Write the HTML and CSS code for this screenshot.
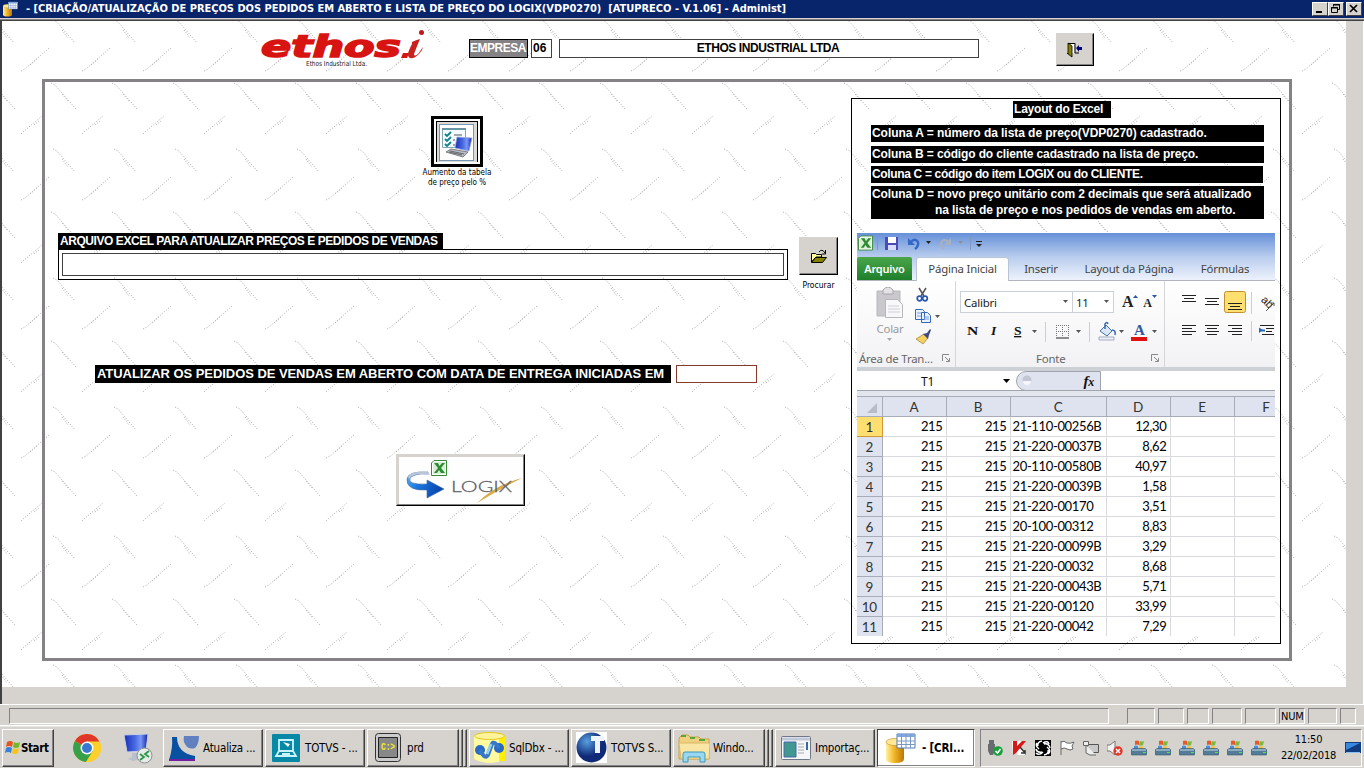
FILE: index.html
```html
<!DOCTYPE html>
<html lang="pt-BR">
<head>
<meta charset="utf-8">
<title>ATUPRECO</title>
<link rel="stylesheet" href="styles.css">
</head>
<body>
<svg class="defs" width="0" height="0">
  <defs>
    <pattern id="weave" width="61" height="129" patternUnits="userSpaceOnUse" x="-2" y="-21">
      <g fill="none" stroke="#b5b5b5" stroke-width="1" stroke-dasharray="1.200 1.500">
        <path d="M53 20l4 2 18 21M62 30l6 8M-8 20l4 2 18 21M1 30l6 8"/>
        <path d="M21 71l4-2 24-21M30 65l7-6"/>
        <path d="M51 83l4 2 21 24M62 94l7 8M-10 83l4 2 21 24M1 94l7 8"/>
        <path d="M21 134l2-2 19-16M34 125l5-4M21 5l2-2 19-16"/>
      </g>
    </pattern>
    <linearGradient id="gold" x1="0" x2="1"><stop offset="0" stop-color="#fff0a0"/><stop offset=".5" stop-color="#f0b020"/><stop offset="1" stop-color="#b87808"/></linearGradient>
    <linearGradient id="blue" x1="0" y1="0" x2="1" y2=".3"><stop offset="0" stop-color="#58b0f0"/><stop offset=".4" stop-color="#1878e0"/><stop offset="1" stop-color="#0848b0"/></linearGradient>
    <linearGradient id="screen" x1="0" x2="1"><stop offset="0" stop-color="#1830b8"/><stop offset=".45" stop-color="#4868e0"/><stop offset=".7" stop-color="#7898f8"/><stop offset="1" stop-color="#1020a0"/></linearGradient>
    <radialGradient id="globe" cx=".35" cy=".3"><stop offset="0" stop-color="#58a0e0"/><stop offset="1" stop-color="#102a78"/></radialGradient>
    <symbol id="xl" viewBox="0 0 16 16"><path d="M3 .5h12.500v15H.5V3z" fill="#fff" stroke="#3a8a3c"/><path d="M2 4l2-2h10v12H2z" fill="#d8efd2"/><path d="M3 3h4l1.500 3L11 3h3l-4 5 4 5h-4l-2-3-2 3H3l4-5z" fill="#2e8b35"/></symbol>
    <symbol id="db" viewBox="0 0 32 32"><path d="M2 10v17q0 4 9 4t9-4V10z" fill="url(#gold)"/><ellipse cx="11" cy="10" rx="9" ry="3.500" fill="#ffe998" stroke="#c58c18" stroke-width=".6"/><path d="M13 2h18v14H13z" fill="#fff" stroke="#5078b8"/><path d="M13 2h18v3H13z" fill="#7fa8e0"/><path d="M13 9h18M13 12.500h18M17.500 2v14M22 2v14M26.500 2v14" stroke="#7898c8"/></symbol>
    <symbol id="drive" viewBox="0 0 16 16"><path d="M4 1q2-1 4 0v4q-2-1-4 0z" fill="#e8582a"/><path d="M9 1q2 1 4 0l-1 4q-2 1-4 0z" fill="#7ab83a"/><path d="M3 6q2-1 4 0v3H3z" fill="#4a90d8"/><path d="M8 6q2 1 4 0l-1 4H8z" fill="#f4c020"/><path d="M0 10l2-1.500h12l2 1.500v4q0 1-1 1H1q-1 0-1-1z" fill="#527c98" stroke="#3c5868" stroke-width=".6"/><path d="M1 10h14" stroke="#c4dce8"/><path d="M12 12.500h3" stroke="#50e848"/></symbol>
  </defs>
</svg>

<header class="titlebar">
  <svg class="title-icon" viewBox="0 0 32 32"><use href="#db"/></svg>
  <h1 class="title-text">- [CRIAÇÃO/ATUALIZAÇÃO DE PREÇOS DOS PEDIDOS EM ABERTO E LISTA DE PREÇO DO LOGIX(VDP0270)&nbsp; [ATUPRECO - V.1.06] - Administ]</h1>
  <div class="win-buttons">
    <span class="win-btn"><svg width="12" height="10"><path d="M2 7h6v2H2z"/></svg></span>
    <span class="win-btn"><svg width="12" height="10"><path d="M3.500 2.500V.5h6v5h-2M3 1h7M1.500 3.500h6v5h-6zM1 4h7" fill="none" stroke="#000"/></svg></span>
    <span class="win-btn gap"><svg width="12" height="10"><path d="M2 1l7 7M9 1L2 8" fill="none" stroke="#000" stroke-width="1.700"/></svg></span>
  </div>
</header>

<main class="client">
  <svg class="weave"><rect width="100%" height="100%" fill="#fff"/><rect width="100%" height="100%" fill="url(#weave)"/></svg>
  <div class="form-head">
    <svg class="ethos" width="168" height="42" viewBox="0 0 168 42">
      <text x="2" y="29" class="ethos-name" textLength="140" lengthAdjust="spacingAndGlyphs">ethos</text>
      <path d="M144 25h6l-2 5h-6z" fill="#d81412"/>
      <path d="M153 14q4-2 8-3-3 7-6 15 0 3 4 0l5-7-1 3q-7 10-12 8-4-2 0-10l2-4z" fill="#c82220"/><circle cx="162.500" cy="4.500" r="2.500" fill="#c01818"/>
      <text x="47" y="38" class="ethos-sub" textLength="61" lengthAdjust="spacingAndGlyphs">Ethos Industrial Ltda.</text>
    </svg>
    <span class="emp-label"><b class="emp-text">EMPRESA</b></span>
    <span class="emp-code">06</span>
    <span class="emp-name"><b class="name-text">ETHOS INDUSTRIAL LTDA</b></span>
    <button class="raised exit"><svg width="18" height="16" viewBox="0 0 18 16"><path d="M2 1.500h7v9.500h4M1 11.500h2" fill="none" stroke="#000"/><path d="M3 2h5v9H5z" fill="#fff"/><path d="M2 1l4 3v11l-4-3z" fill="#848200" stroke="#000" stroke-width=".8"/><path d="M10 6l3-3v2h3v3h-3v2z" fill="#00007b"/></svg></button>
  </div>

  <section class="frame">
    <div class="left">
      <div class="aumento">
        <button class="aum-btn"><svg width="40" height="40" viewBox="0 0 40 40"><path d="M0 0h40v40H0z" fill="#dcdad6"/><rect x="2.500" y="2.500" width="34" height="36" fill="#fff" stroke="#004078" stroke-dasharray="1 1"/><path d="M5.500 6.500h23v19h-23z" fill="#f4fbff" stroke="#82a8b8"/><path d="M5 7h24" stroke="#6894a8" stroke-width="2"/><path d="M8 12l2 2 4-4M8 17l2 2 4-4M8 22l2 2 4-4" fill="none" stroke="#118088" stroke-width="1.800"/><path d="M17 13h8M16 18h2M16 23h2" stroke="#555"/><path d="M20 15l15 1-3 13-14-3z" fill="url(#screen)" stroke="#98a8d8" stroke-width=".8"/><path d="M14 27l17 3-5 5-17-5z" fill="#b8bcc4" stroke="#666" stroke-width=".8"/><path d="M13 29l14 3M12 30l13 3" stroke="#444" stroke-width=".7"/></svg></button>
        <p class="small">Aumento da tabela<br>de preço pelo %</p>
      </div>
      <div class="file">
        <div class="file-main">
          <span class="tag file-tag"><b class="file-text">ARQUIVO EXCEL PARA ATUALIZAR PREÇOS E PEDIDOS DE VENDAS</b></span>
          <div class="file-box"><div class="file-input"></div></div>
        </div>
        <div class="procurar">
          <button class="raised open"><svg width="18" height="15" viewBox="0 0 18 15"><path d="M1.500 13V4.500h4l1 1h5V8H6z" fill="#ffff9c" stroke="#000"/><path d="M1.500 13.500l4-5h11l-4 5z" fill="#848200" stroke="#000"/><path d="M9 3q3-4 6 1M15.500 1v4H12" fill="none" stroke="#000"/></svg></button>
          <p class="small proc-text">Procurar</p>
        </div>
      </div>
      <div class="update">
        <span class="tag upd-tag"><b class="upd-text">ATUALIZAR OS PEDIDOS DE VENDAS EM ABERTO COM DATA DE ENTREGA INICIADAS EM</b></span>
        <span class="date-input"></span>
      </div>
      <button class="raised logix"><svg width="124" height="47" viewBox="0 0 124 47"><path d="M0 0h124v47H0z" fill="#fefefe"/><path d="M78 46Q96 28 123 21 101 32 78 46z" fill="#d8ac4c"/><path d="M29 15Q9 14 8 22q-1 12 20 11v8l17-9-17-9v4Q8 28 11 21q5-5 18-4z" fill="url(#blue)" stroke="#486898" stroke-width=".6"/><path d="M10 22q5-7 21-4l-2-3Q11 14 9 20z" fill="#b8c4d8"/><svg x="32" y="3" width="16" height="16"><use href="#xl"/></svg><text x="52" y="35" class="logix-text" textLength="61" lengthAdjust="spacingAndGlyphs">LOGIX</text></svg></button>
    </div>

    <aside class="layout">
      <h2 class="tag lay-title"><b class="lt">Layout do Excel</b></h2>
      <p class="tag col a"><b class="ca">Coluna A = número da lista de preço(VDP0270) cadastrado.</b></p>
      <p class="tag col b"><b class="cb">Coluna B = código do cliente cadastrado na lista de preço.</b></p>
      <p class="tag col c"><b class="cc">Coluna C = código do item LOGIX ou do CLIENTE.</b></p>
      <p class="tag col d"><b class="cd">Coluna D = novo preço unitário com 2 decimais que será atualizado</b><b class="cd2">na lista de preço e nos pedidos de vendas em aberto.</b></p>

      <div class="excel">
        <div class="qat"><svg width="140" height="24" viewBox="0 0 140 24"><svg x="1" y="2" width="15" height="16"><use href="#xl"/></svg><path d="M20.500 4v13" stroke="#8098c0"/><path d="M28 4h13v13H28z" fill="#4a4ab8"/><path d="M31 4h8v6h-8z" fill="#fff"/><path d="M31 12h8v5h-8z" fill="#d8dcf8"/><path d="M53 10q5-6 8-1 1 4-3 7" fill="none" stroke="#3468c8" stroke-width="2.400"/><path d="M51 5v7h7z" fill="#3468c8"/><path d="M69 8h5l-2.500 3z" fill="#222"/><path d="M92 10q-5-6-8 0 0 4 3 6" fill="none" stroke="#a8b0c0" stroke-width="2"/><path d="M94 5v7h-7z" fill="#a8b0c0"/><path d="M101 8h5l-2.500 3z" fill="#8890a0"/><path d="M113.500 4v13" stroke="#8098c0"/><path d="M119 8.500h6" stroke="#222"/><path d="M119 11h6l-3 3z" fill="#222"/></svg></div>
        <div class="tabs">
          <span class="tab file-tab"><i class="x1">Arquivo</i></span><span class="tab on"><i>Página Inicial</i></span><span class="tab t3"><i>Inserir</i></span><span class="tab t4"><i>Layout da Página</i></span><span class="tab t5"><i>Fórmulas</i></span>
        </div>
        <div class="ribbon">
          <div class="grp clip">
            <div class="clip-body">
              <div class="colar"><svg width="28" height="32" viewBox="0 0 28 32"><path d="M1 4h23v25H1z" fill="#cac8cc" stroke="#b8b6ba"/><path d="M7 3q5-6 10 0v4H7z" fill="#e4e2e6" stroke="#a8a6aa"/><path d="M9.500 12.500h12l5 5v13h-17z" fill="#f8f8fa" stroke="#b8b6ba"/><path d="M12 19h11M12 22h12M12 25h12" stroke="#d0ced4"/></svg><span class="x6">Colar</span><svg width="6" height="4"><path d="M0 0h5L2.500 3z" fill="#aaa"/></svg></div>
              <div class="clip-tools"><svg width="26" height="60" viewBox="0 0 26 60"><path d="M4 1l5 8M11 1L6 9" stroke="#555" stroke-width="1.500"/><circle cx="4.500" cy="11.500" r="2.300" fill="none" stroke="#2858b0" stroke-width="1.700"/><circle cx="10" cy="11.500" r="2.300" fill="none" stroke="#2858b0" stroke-width="1.700"/><path d="M.5 22.500h7l2 2v8h-9zM6.500 25.500h6l3 3v7h-9z" fill="#e8f2ff" stroke="#3868b8"/><path d="M2 26h4M2 29h4M9 30h5M9 32h5" stroke="#78a0e0"/><path d="M20 28h5l-2.500 3z" fill="#555"/><path d="M1 52l8-5 4 4-5 6z" fill="#f4d060" stroke="#a08030" stroke-width=".7"/><path d="M8 47l4-1 3-4 1 1-2 5-1 4z" fill="#404a80"/></svg></div>
            </div>
            <div class="grp-name"><span class="x7">Área de Tran...</span><svg width="8" height="8"><path d="M.5 7V.5H7M3 3l4 4M7.500 4v3.500H4" fill="none" stroke="#888"/></svg></div>
          </div>
          <div class="grp font">
            <div class="font-row"><span class="combo fam"><span>Calibri</span><svg width="6" height="4"><path d="M0 0h5L2.500 3z" fill="#555"/></svg></span><span class="combo size"><span>11</span><svg width="6" height="4"><path d="M0 0h5L2.500 3z" fill="#555"/></svg></span><span class="big-a">A</span><svg class="caret" width="5" height="3"><path d="M0 3h5L2.500 0z" fill="#2858a8"/></svg><span class="small-a">A</span><svg class="caret" width="5" height="3"><path d="M0 0h5L2.500 3z" fill="#2858a8"/></svg></div>
            <svg class="font-tools" width="206" height="22" viewBox="0 0 206 22"><g class="biu"><text x="11" y="14" textLength="11" lengthAdjust="spacingAndGlyphs">N</text><text x="35" y="14" font-style="italic">I</text><text x="58" y="14" text-decoration="underline">S</text></g><path d="M76 9h5l-2.500 3zM120 9h5l-2.500 3zM163 9h5l-2.500 3zM196 9h5l-2.500 3z" fill="#555"/><path d="M89.500 1v20M133.500 1v20" stroke="#ccced4"/><path d="M100.500 4v12M106.500 4v12M112.500 4v12M100 4.500h13M100 10.500h13" stroke="#777" stroke-dasharray="1 1"/><path d="M100 17h13" stroke="#222"/><path d="M144 10l6-6 6 6-5 5z" fill="#d8e8f8" stroke="#4870a8"/><path d="M149 8V3q2-3 3 0M156 9q4 0 3 5" fill="none" stroke="#3868b0" stroke-width="1.500"/><path d="M143 16h15v3h-15z" fill="#eef0f8" stroke="#8890b0" stroke-width=".7"/><text x="178" y="14" class="color-a">A</text><path d="M175 16h16v4h-16z" fill="#e01010"/></svg>
            <div class="grp-name mid"><span>Fonte</span><svg width="8" height="8"><path d="M.5 7V.5H7M3 3l4 4M7.500 4v3.500H4" fill="none" stroke="#888"/></svg></div>
          </div>
          <div class="grp align"><svg width="110" height="64" viewBox="0 0 110 64"><rect x="46.500" y="10.500" width="21" height="21" rx="2" fill="#ffdf70" stroke="#c09030"/><g stroke="#222"><path d="M4 14.500h14M6 17.500h10M4 20.500h14M27 17.500h14M29 20.500h10M27 23.500h14M50 22.500h14M52 25.500h10M50 28.500h14"/><path d="M4 44.500h14M4 47.500h10M4 50.500h14M4 53.500h10M27 44.500h14M29 47.500h10M27 50.500h14M29 53.500h10M50 44.500h14M54 47.500h10M50 50.500h14M54 53.500h10M82 44.500h14M88 47.500h8M88 50.500h6M84 53.500h12"/></g><path d="M73.500 11v22M73.500 40v20" stroke="#ccced4"/><path d="M85 49l-4-2.500V52z" fill="#2868b8"/><path d="M83 49.500h4" stroke="#2868b8" stroke-width="2"/><text x="82" y="21" class="ab" transform="rotate(45 84 21)">ab</text><path d="M88 30l8-8M96 25v-3h-3" stroke="#555" fill="none"/><path d="M99 19h5l-2.500 3z" fill="#555"/><path d="M99 49h5l-2.500 3z" fill="#555"/></svg></div>
        </div>
        <div class="formula"><span class="cellname">T1</span><svg class="dd" width="8" height="5"><path d="M0 0h7L3.500 4z"/></svg><span class="fx"><svg width="12" height="12"><circle cx="6" cy="5" r="4.500" fill="#c2c6d2"/><path d="M2 6a4 4 0 0 0 8 0z" fill="#f4f6fa"/></svg><em>f<small>x</small></em></span></div>
        <table class="sheet">
          <colgroup><col class="w25"><col class="w64"><col class="w64"><col class="w96"><col class="w64"><col class="w64"><col class="w64"></colgroup>
          <tr><th><svg width="12" height="12"><path d="M11 1v10H1z" fill="#b8bcc8"/></svg></th><th>A</th><th>B</th><th>C</th><th>D</th><th>E</th><th>F</th></tr>
          <tr><th class="sel">1</th><td>215</td><td>215</td><td class="code">21-110-00256B</td><td>12,30</td><td></td><td></td></tr>
          <tr><th>2</th><td>215</td><td>215</td><td class="code">21-220-00037B</td><td>8,62</td><td></td><td></td></tr>
          <tr><th>3</th><td>215</td><td>215</td><td class="code">20-110-00580B</td><td>40,97</td><td></td><td></td></tr>
          <tr><th>4</th><td>215</td><td>215</td><td class="code">21-220-00039B</td><td>1,58</td><td></td><td></td></tr>
          <tr><th>5</th><td>215</td><td>215</td><td class="code">21-220-00170</td><td>3,51</td><td></td><td></td></tr>
          <tr><th>6</th><td>215</td><td>215</td><td class="code">20-100-00312</td><td>8,83</td><td></td><td></td></tr>
          <tr><th>7</th><td>215</td><td>215</td><td class="code">21-220-00099B</td><td>3,29</td><td></td><td></td></tr>
          <tr><th>8</th><td>215</td><td>215</td><td class="code">21-220-00032</td><td>8,68</td><td></td><td></td></tr>
          <tr><th>9</th><td>215</td><td>215</td><td class="code">21-220-00043B</td><td>5,71</td><td></td><td></td></tr>
          <tr><th>10</th><td>215</td><td>215</td><td class="code">21-220-00120</td><td>33,99</td><td></td><td></td></tr>
          <tr><th>11</th><td>215</td><td>215</td><td class="code">21-220-00042</td><td>7,29</td><td></td><td></td></tr>
        </table>
      </div>
    </aside>
  </section>
</main>

<div class="status">
  <span class="cell msg"></span><span class="cell c28"></span><span class="cell c26"></span><span class="cell c22"></span><span class="cell c30"></span><span class="cell c31"></span><span class="cell c26 num">NUM</span><span class="cell c29"></span><span class="cell c16"></span>
</div>

<footer class="taskbar">
  <button class="task start"><svg width="17" height="16" viewBox="0 0 17 16"><path d="M3 2q3-2 6 0L8 7Q5 5 2 7z" fill="#e85420"/><path d="M10 2q3 2 6 0l-1 5q-3 2-6 0z" fill="#72b82c"/><path d="M2 8q3-2 6 0l-1 5q-3-2-6 0z" fill="#3880d8"/><path d="M9 8q3 2 6 0l-1 5q-3 2-6 0z" fill="#f8c418"/></svg><b class="y0">Start</b></button>
  <svg class="chrome" width="28" height="28" viewBox="0 0 28 28"><circle cx="14" cy="14" r="14" fill="#fbd02a"/><path d="M14 14L1.900 7A14 14 0 0 0 13 28l7-11z" fill="#38a048"/><path d="M14 7.500h12.300A14 14 0 0 1 13 28l7-11z" fill="#fbd02a"/><path d="M14 14L1.900 7A14 14 0 0 1 26.300 7.500H14z" fill="#e03828"/><circle cx="14" cy="14" r="6.500" fill="#fff"/><circle cx="14" cy="14" r="5" fill="#3878d0"/></svg>
  <svg class="rdp" width="30" height="32" viewBox="0 0 30 32"><path d="M1 3l24-1-2 17-19 1z" fill="url(#screen)" stroke="#c8d0e0"/><path d="M9 21h8l1 4 5 1-13 3-5-2 4-2z" fill="#b8c0cc"/><circle cx="21.500" cy="23.500" r="7.500" fill="#e8eae8" stroke="#889090"/><path d="M17 22l4 3-4 3M26 19l-4 3 4 3" stroke="#289848" stroke-width="1.800" fill="none"/></svg>
  <button class="task w100"><svg width="32" height="32" viewBox="0 0 32 32"><path d="M4 5h5q0 16 18 19v4H1q4-12 3-23z" fill="#0850a0"/><path d="M1 28h26" stroke="#7020a0" stroke-width="2"/><path d="M16 4h15q0 8-4 12-7 2-10-4-2-3-1-8z" fill="#6080c0"/></svg><span>Atualiza ...</span></button>
  <button class="task w100"><svg width="32" height="32" viewBox="0 0 32 32"><rect x="2" y="2" width="28" height="28" rx="1" fill="#0788a4"/><path d="M9 8h14v11H9zM9 19l-3 5h20l-3-5M12 22h8" fill="none" stroke="#c8f4ff" stroke-width="1.800"/><path d="M13 10l5 5 2-3z" fill="#fff"/></svg><span>TOTVS - ...</span></button>
  <button class="task w92"><svg width="32" height="32" viewBox="0 0 32 32"><rect x="3.500" y="1.500" width="25" height="28" rx="3" fill="#ccc" stroke="#333"/><path d="M6.500 5.500h19v20h-19z" fill="#888" stroke="#222"/><text x="9" y="18" class="dos" textLength="14" lengthAdjust="spacingAndGlyphs">C:&gt;</text></svg><span>prd</span></button><i class="edge"></i><i class="edge last"></i>
  <button class="task w100"><svg width="32" height="32" viewBox="0 0 32 32"><path d="M0 4v23q16 8 31 0V4z" fill="#fff9a0"/><path d="M25 4h6v25h-6z" fill="#fff000"/><ellipse cx="15.500" cy="4" rx="15" ry="3.500" fill="#fff49a" stroke="#e0c820"/><circle cx="6" cy="18" r="5" fill="#2868c8"/><circle cx="25" cy="16" r="5" fill="#2868c8"/><path d="M6 18q5 10 8 5l4-11q2-4 7 4" fill="none" stroke="#3878c8" stroke-width="4"/><path d="M13 22l4-10" stroke="#90d0f0" stroke-width="3"/></svg><span>SqlDbx - ...</span></button>
  <button class="task w100"><svg width="32" height="32" viewBox="0 0 32 32"><path d="M0 0h31v31H0z" fill="#fff"/><circle cx="15.500" cy="15.500" r="15" fill="url(#globe)"/><path d="M15 4h13v5h-4v12h-5V9h-4z" fill="#eef4fc"/></svg><span>TOTVS S...</span></button>
  <button class="task w92"><svg width="32" height="32" viewBox="0 0 32 32"><path d="M1 6l3-3h6l2 2h9l2 2h8v20H1z" fill="#f0d080" stroke="#c8a048"/><path d="M3 4h5M12 6h5M21 8h6" stroke="#58a838" stroke-width="2"/><path d="M1 11h31l-1 16H3z" fill="#fae6a4" stroke="#d8b868"/><path d="M5 30v-8q0-2 2-2h18q2 0 2 2v8h-5v-5H10v5z" fill="#98d8f0" stroke="#4098b8"/></svg><span>Windo...</span></button><i class="edge"></i><i class="edge last"></i>
  <button class="task w100"><svg width="32" height="32" viewBox="0 0 32 32"><rect x="1.500" y="4.500" width="29" height="23" rx="1" fill="#f4f6fa" stroke="#707888"/><path d="M2 7h28" stroke="#c0c8d8" stroke-width="3"/><path d="M4 10h12v15H4z" fill="#409890" stroke="#4868a8"/><path d="M18 12h6M18 15h6M18 18h6M18 21h6" stroke="#aaa"/><path d="M27 10v8" stroke="#3868a8" stroke-width="2"/></svg><span>Importaç...</span></button>
  <button class="task active"><svg width="32" height="32"><use href="#db"/></svg><b class="y8">- [CRI...</b></button>
  <div class="tray">
    <svg viewBox="0 0 16 16"><path d="M2 0h5v4h1v7l-2 4H3l-2-4V4h1z" fill="#686c70"/><circle cx="11" cy="11" r="4.800" fill="#18a038"/><path d="M8.500 11l2 2 3-4" stroke="#fff" fill="none" stroke-width="1.500"/></svg>
    <svg viewBox="0 0 16 16"><path d="M1 1h13L9 6l6 9H7l-2-4-3 4z" fill="#fff"/><path d="M2 1h4v5l5-5h4L5 13l-3 2z" fill="#d81818"/><path d="M9 7l5 6v-3M14 13h-4" stroke="#333" stroke-width="1.500" fill="none"/></svg>
    <svg viewBox="0 0 16 16"><path d="M0 0h16v16H0z"/><path d="M8 3q5-3 6 1M12 7q5 4 1 7M8 12q-4 4-7 1M4 9Q0 6 2 3M7 1q-5 1-4 5M15 8q-1-5-6-4M9 15q5-1 4-5M1 9q1 4 6 3" stroke="#fff" fill="none" stroke-width="1.500"/></svg>
    <svg viewBox="0 0 16 16"><path d="M2 1v14M2 2q3-2 6 1 3 1 7-1l-2 4 1 3q-3 2-6 0-2-2-6 0" fill="#fff" stroke="#686868"/></svg>
    <svg viewBox="0 0 16 16"><path d="M4.500 4.500h11v8h-11z" fill="#c8c8c8" stroke="#555"/><path d="M.5 1.500h5v4h-5zM3 5v8l4 2h6" fill="#eee" stroke="#666"/></svg>
    <svg viewBox="0 0 16 16"><path d="M0 5h3l5-4v14l-5-4H0z" fill="#f4f4f4" stroke="#777"/><circle cx="11" cy="11" r="4.700" fill="#e03828"/><path d="M9 9l4 4M13 9l-4 4" stroke="#fff" stroke-width="1.500"/></svg>
    <svg><use href="#drive"/></svg><svg><use href="#drive"/></svg><svg><use href="#drive"/></svg><svg><use href="#drive"/></svg><svg><use href="#drive"/></svg><svg><use href="#drive"/></svg>
    <div class="clock"><span>11:50</span><span>22/02/2018</span></div>
    <svg class="desk" viewBox="0 0 16 14"><path d="M0 1h16v11H0z" fill="#103c80"/><path d="M1 2h14L1 9z" fill="#3888e0"/><path d="M1 11.500h14" stroke="#8cc0f0"/></svg>
  </div>
</footer>
</body>
</html>
```
FILE: styles.css
```css
* { box-sizing: border-box; }
body { margin: 0; width: 1364px; height: 768px; overflow: hidden; display: flex; flex-direction: column; background: #d6d3ce; font-family: "DejaVu Sans Condensed", "DejaVu Sans", sans-serif; font-size: 11px; color: #000; }
h1, h2, p { margin: 0; font-size: inherit; }
button { padding: 0; border: 0; font: inherit; color: inherit; }
svg { display: block; flex: none; }
b, i, span { white-space: nowrap; }
.defs { position: absolute; }

.titlebar { height: 20px; flex: none; display: flex; align-items: center; background: #08246b; padding: 0 0 1px 2px; color: #fff; border-bottom: 1px solid #848284; box-shadow: inset 0 -1px #d6d3ce; }
.title-icon { width: 16px; height: 16px; }
.title-text { margin-left: 8px; font-weight: bold; font-size: 11px; line-height: 18px; letter-spacing: -.02px; white-space: nowrap; }
.win-buttons { display: flex; margin-left: auto; padding-right: 2px; }
.win-btn { width: 16px; height: 14px; background: #d6d3ce; border: 1px solid; border-color: #fff #424142 #424142 #fff; display: grid; place-items: center; }
.win-btn.gap { margin-left: 2px; }

.client { position: relative; height: 684px; flex: none; background: #d6d3ce; border: solid #424142; border-width: 1px 0 0 2px; box-shadow: inset -1px 0 #fff; }
.weave { position: absolute; left: 0; top: 0; width: 1344px; height: 666px; }
.form-head { position: relative; display: flex; align-items: flex-start; height: 58px; padding-left: 257px; }
.ethos { margin-top: 7px; }
.ethos-name { font: italic bold 30px "DejaVu Sans", sans-serif; fill: #d81412; stroke: #d81412; stroke-width: 1.6px; }
.ethos-sub { font: 7px "DejaVu Sans", sans-serif; fill: #222; }
.emp-label, .emp-code, .emp-name { height: 19px; margin-top: 18px; border: 1px solid #424142; background: #fff; font: bold 12px/17px "Liberation Sans", sans-serif; }
.emp-label { margin-left: 42px; width: 59px; background: #848284; border-color: #000; color: #fff; letter-spacing: -.48px; }
.emp-code { width: 21px; margin-left: 3px; padding-left: 1px; }
.emp-name { width: 420px; margin-left: 7px; padding-right: 2px; text-align: center; letter-spacing: -.43px; }
.raised { display: grid; place-items: center; background: #d6d3ce; border-style: solid; border-width: 1px; border-color: #d6d3ce #000 #000 #d6d3ce; box-shadow: inset -1px -1px #848284; }
.exit { width: 38px; height: 33px; margin: 12px 0 0 77px; }

.frame { position: relative; display: flex; width: 1250px; height: 582px; margin-left: 40px; border: 3px solid #848284; }
.left { width: 806px; }
.tag { display: block; background: #000; color: #fff; font: bold 12px/16px "Liberation Sans", sans-serif; }
.small { font: 8px/10px "DejaVu Sans Condensed", sans-serif; text-align: center; }
.aumento { width: 90px; margin: 34px 0 0 367px; display: flex; flex-direction: column; align-items: center; }
.aum-btn { width: 52px; height: 51px; border: 3px solid #000; padding: 1px; background: #fff; display: grid; place-items: center; box-shadow: inset 0 0 0 2px #fff, inset 0 0 0 4px #000; }
.aumento .small { margin-top: 1px; }
.file { display: flex; margin: 45px 0 0 13px; }
.file-tag { width: 385px; padding-left: 2px; letter-spacing: -.44px; }
.file-box { width: 730px; height: 31px; padding: 3px; border: 1px solid #000; }
.file-input { height: 23px; border: 1px solid #424142; background: #fff; }
.procurar { margin: 4px 0 0 11px; }
.open { width: 39px; height: 38px; }
.proc-text { margin-top: 5px; font-size: 8.500px; }
.update { display: flex; margin: 75px 0 0 50px; }
.upd-tag { width: 576px; height: 18px; padding-left: 2px; line-height: 18px; font-size: 13px; letter-spacing: -.055px; }
.date-input { width: 81px; height: 18px; margin-left: 5px; border: 1px solid #843c29; background: #fff; }
.logix { width: 129px; height: 52px; margin: 71px 0 0 351px; }
.logix-text { font: 300 16.500px "Lato", sans-serif; fill: #606068; stroke: #606068; stroke-width: .3px; }

.layout { width: 430px; height: 546px; margin-top: 16px; border: 1px solid #000; padding: 2px 5px 0; }
.lay-title { width: 98px; height: 17px; margin-left: 156px; padding-left: 1px; line-height: 17px; letter-spacing: -.2px; }
.col { width: 393px; height: 17px; margin-left: 14px; padding-left: 1px; line-height: 17px; }
.a { margin-top: 7px; letter-spacing: -.05px; }
.b { margin-top: 4px; letter-spacing: -.13px; }
.c { margin-top: 3px; width: 392px; letter-spacing: -.34px; }
.d { margin-top: 3px; height: 33px; line-height: 16px; }
.col b { display: block; }
.cd { letter-spacing: -.1px; }
.cd2 { padding-left: 63px; letter-spacing: -.08px; }

.excel { width: 418px; height: 403px; margin-top: 14px; overflow: hidden; background: #fff; font: 11.400px "Noto Sans", sans-serif; letter-spacing: -.2px; color: #444; }
.qat { height: 24px; background: linear-gradient(#6590d8, #b9cdee); }
.tabs { display: flex; height: 24px; background: linear-gradient(#b9cdee, #edf2fc); border-bottom: 1px solid #b0b4bc; }
.tab { height: 23px; line-height: 23px; text-align: center; }
.tab i { font-style: normal; }
.file-tab { width: 55px; background: linear-gradient(#4ba64a, #1e7e2a); border-radius: 2px 2px 0 0; color: #fff; font-weight: 600; font-size: 11px; }
.on { width: 93px; height: 24px; margin-left: 4px; background: #fff; border: 1px solid #b8c4d8; border-bottom: 0; border-radius: 3px 3px 0 0; }
.on i { position: relative; top: -1px; }
.t3 { width: 64px; }
.t4 { width: 112px; }
.t5 { width: 80px; }
.ribbon { display: flex; height: 86px; background: linear-gradient(#fff, #f2f2f5); }
.grp { height: 86px; border-right: 1px solid #d4d6da; flex: none; }
.clip { width: 99px; }
.clip-body { display: flex; height: 68px; }
.colar { width: 56px; padding: 6px 0 0 10px; display: flex; flex-direction: column; align-items: center; color: #999; }
.colar span { line-height: 19px; }
.clip-tools { padding: 6px 0 0 2px; }
.grp-name { display: flex; align-items: center; justify-content: space-between; height: 18px; padding: 0 5px 0 2px; color: #666; }
.grp-name.mid { padding-left: 80px; }
.font { width: 209px; }
.font-row { display: flex; align-items: flex-start; padding: 10px 0 0 4px; height: 33px; color: #222; }
.combo { display: flex; align-items: center; justify-content: space-between; height: 22px; border: 1px solid #ccd0d8; background: #fff; padding: 0 3px; }
.fam { width: 113px; }
.size { width: 42px; margin-left: -1px; }
.big-a { font: bold 16px/22px "Liberation Serif", serif; margin-left: 8px; }
.small-a { font: bold 12px/24px "Liberation Serif", serif; margin-left: 5px; }
.caret { margin-top: 4px; }
.font-tools { margin-top: 7px; margin-bottom: 6px; }
.biu { font: bold 13.500px "Liberation Serif", serif; fill: #111; }
.color-a { font: bold 15px "Liberation Serif", serif; fill: #3058a0; }
.ab { font: 11px "Liberation Sans", sans-serif; fill: #222; }
.align { border: 0; padding-left: 13px; }
.formula { display: flex; align-items: center; height: 29px; border-top: 4px solid #cdd0d5; border-bottom: 5px solid #e3e6ec; box-shadow: inset 0 -1px #a0a4ac; font-size: 12px; color: #111; }
.cellname { width: 141px; text-align: center; }
.dd { margin-left: 5px; }
.fx { display: flex; align-items: center; justify-content: space-between; width: 85px; height: 20px; margin-left: 5px; padding: 0 6px 0 4px; border: 1px solid #a0a4ac; border-radius: 10px 0 0 10px; background: #dfe3ef; font: bold 15px/18px "Liberation Serif", serif; }
.fx small { font-size: 12px; }
.sheet { width: 441px; table-layout: fixed; border-collapse: collapse; font: 13px "Lato", sans-serif; letter-spacing: -.35px; color: #000; white-space: nowrap; }
.sheet tr { height: 20px; }
.sheet th { height: 20px; padding: 0; font-weight: normal; background: #dfe3ef; border: 1px solid #a8acb8; border-left: 0; color: #333; font-size: 13.500px; line-height: 18px; }
.sheet th svg { margin: 3px 0 0 9px; }
.sheet .sel { background: #ffdf70; border-color: #d09838; }
.sheet td { padding: 0 3px 0 2px; text-align: right; border-right: 1px solid #d8dade; border-bottom: 1px solid #d8dade; line-height: 19px; }
.sheet .code { text-align: left; }
.w25 { width: 25px; } .w64 { width: 64px; } .w96 { width: 96px; }

.status { display: flex; align-items: flex-start; height: 22px; flex: none; padding: 3px 0 0 9px; gap: 3px; border-top: 1px solid #fff; border-bottom: 1px solid #fff; }
.cell { height: 16px; border: 1px solid; border-color: #848284 #fff #fff #848284; line-height: 15px; letter-spacing: -.2px; }
.num { padding-left: 1px; }
.msg { width: 1100px; margin-right: 15px; }
.c28 { width: 28px; } .c26 { width: 26px; } .c22 { width: 22px; } .c30 { width: 30px; } .c31 { width: 31px; } .c29 { width: 29px; } .c16 { width: 16px; }

.taskbar { display: flex; align-items: flex-start; height: 42px; padding: 2px 2px 0; border-top: 1px solid #e8e6e2; }
.task { display: flex; align-items: center; height: 38px; flex: none; background: #d6d3ce; border: 1px solid; border-color: #fff #424142 #424142 #fff; box-shadow: inset -1px -1px #848284; padding-left: 4px; margin-right: 2px; font-size: 11.500px; letter-spacing: -.17px; }
.task svg { margin-right: 3px; }
.start { width: 52px; padding-left: 1px; margin-right: 19px; letter-spacing: -.4px; }
.start svg { margin-right: 0; }
.chrome { margin: 5px 22px 0 0; }
.rdp { margin: 3px 10px 0 0; }
.w100 { width: 100px; }
.w92 { width: 92px; margin-right: 0; }
.edge { width: 4px; height: 38px; flex: none; border: 1px solid; border-color: #fff #424142 #424142 #d6d3ce; box-shadow: inset -1px 0 #848284; }
.edge.last { margin-right: 2px; }
.dos { font: bold 10px "Liberation Mono", monospace; fill: #f0f020; }
.active { width: 98px; background: #fff; border-color: #424142 #fff #fff #424142; margin-right: 5px; padding-left: 6px; }
.active svg { margin-right: 6px; }
.tray { display: flex; align-items: center; gap: 8px; width: 382px; height: 38px; padding-left: 6px; border: 1px solid; border-color: #848284 #fff #fff #848284; }
.tray svg { width: 16px; height: 16px; }
.clock { width: 62px; margin-left: 5px; display: flex; flex-direction: column; text-align: center; line-height: 16px; font-size: 11px; letter-spacing: -.18px; }
.tray .desk { height: 14px; }
```
